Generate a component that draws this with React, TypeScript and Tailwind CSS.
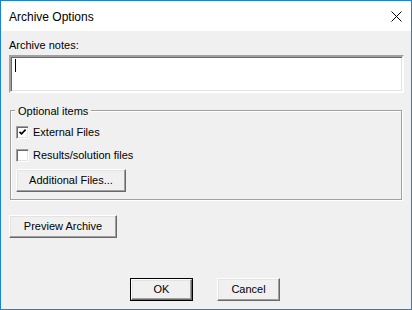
import React from "react";

const font = { fontFamily: '"Liberation Sans", Arial, sans-serif' };

function Btn({ children, w, def }: { children: React.ReactNode; w: string; def?: boolean }) {
  if (def) {
    return (
      <div className={`${w} h-[23px] border border-[#000] flex`}>
        <div className="flex-1 flex items-center justify-center bg-[#f0f0f0] border border-t-white border-l-white border-b-[#696969] border-r-[#696969] shadow-[inset_-1px_-1px_0_#a0a0a0,inset_1px_1px_0_#e3e3e3] text-[11px] leading-[13px] text-black">
          {children}
        </div>
      </div>
    );
  }
  return (
    <div className={`${w} h-[23px] flex items-center justify-center bg-[#f0f0f0] border border-t-white border-l-white border-b-[#696969] border-r-[#696969] shadow-[inset_-1px_-1px_0_#a0a0a0,inset_1px_1px_0_#e3e3e3] text-[11px] leading-[13px] text-black`}>
      {children}
    </div>
  );
}

function Check({ checked }: { checked?: boolean }) {
  return (
    <div className="w-[13px] h-[13px] bg-white border border-t-[#a0a0a0] border-l-[#a0a0a0] border-b-white border-r-white shadow-[inset_1px_1px_0_#696969,inset_-1px_-1px_0_#e3e3e3] flex items-center justify-center">
      {checked && (
        <svg width="9" height="9" viewBox="0 0 9 9">
          <path d="M1.5 3.8 L3.5 5.8 L7.6 1.7" fill="none" stroke="#000" strokeWidth="1.7" />
        </svg>
      )}
    </div>
  );
}

export default function App() {
  return (
    <div style={font} className="w-[412px] h-[310px] border border-[#1883d7] flex flex-col text-black">
      <div className="h-[30px] bg-white flex items-center justify-between pl-[8px] pr-[9px] shrink-0">
        <span className="text-[12px] leading-[14px] mt-[1px]">Archive Options</span>
        <svg width="11" height="11" viewBox="0 0 11 11" className="mt-[1px]">
          <path d="M0.5 0.5 L10.5 10.5 M10.5 0.5 L0.5 10.5" stroke="#000" strokeWidth="1" />
        </svg>
      </div>
      <div className="flex-1 bg-[#f0f0f0] flex flex-col pl-[8px] pr-[7px] pb-[8px] text-[11px] leading-[13px]">
        <div className="mt-[8px]">Archive notes:</div>
        <div className="mt-[3px] h-[38px] bg-white border-2 border-t-[#a0a0a0] border-l-[#a0a0a0] border-b-white border-r-white shadow-[inset_1px_1px_0_#696969,inset_-1px_-1px_0_#e3e3e3] pl-[4px] pt-[1px]">
          <div className="w-[1px] h-[13px] bg-black mt-[1px]" />
        </div>
        <div className="relative mt-[17px] ml-[1px] w-[392px] h-[90px] border border-[#a0a0a0] shadow-[inset_1px_1px_0_#fff,1px_1px_0_#fff] flex flex-col pl-[5px] pt-[15px]">
          <div className="absolute left-[4px] top-[-6px] px-[3px] bg-[#f0f0f0]">Optional items</div>
          <div className="flex items-center h-[13px]">
            <Check checked />
            <span className="ml-[4px]">External Files</span>
          </div>
          <div className="flex items-center h-[13px] mt-[10px]">
            <Check />
            <span className="ml-[4px]">Results/solution files</span>
          </div>
          <div className="mt-[7px]">
            <Btn w="w-[110px]">Additional Files...</Btn>
          </div>
        </div>
        <div className="mt-[15px]">
          <Btn w="w-[108px]">Preview Archive</Btn>
        </div>
        <div className="mt-auto flex ml-[121px] gap-[24px]">
          <Btn w="w-[63px]" def>OK</Btn>
          <Btn w="w-[63px]">Cancel</Btn>
        </div>
      </div>
    </div>
  );
}
